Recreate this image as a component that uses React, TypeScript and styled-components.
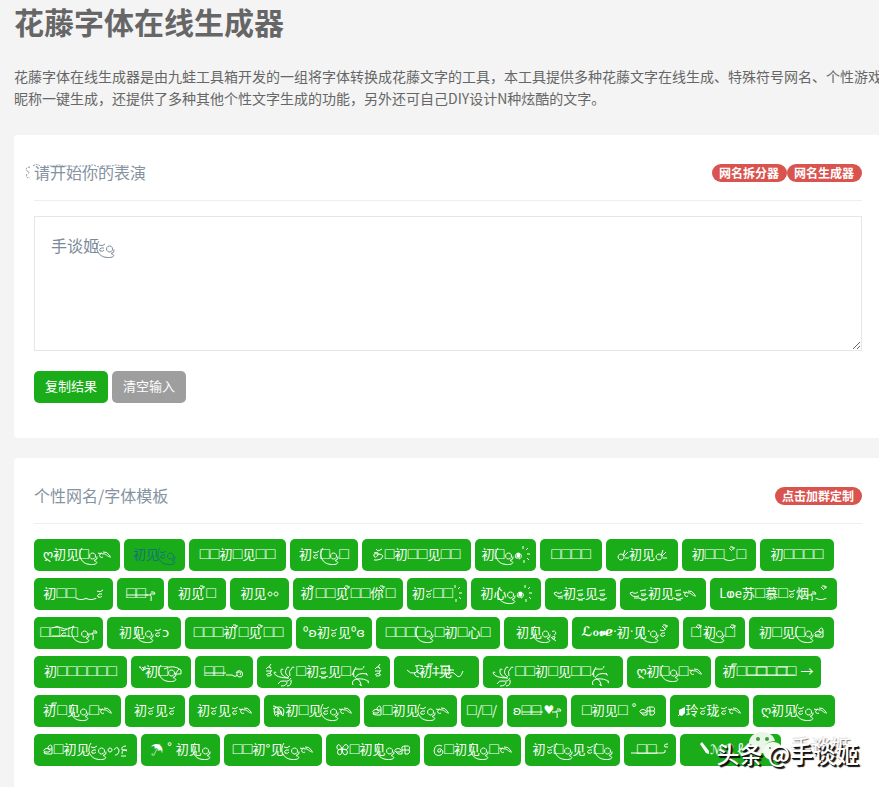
import React from "react";
import styled, { createGlobalStyle } from "styled-components";

const GlobalStyle = createGlobalStyle`
  *, *::before, *::after { box-sizing: border-box; }
  body {
    margin: 0;
    overflow: hidden;
    background: #f4f4f4;
    color: #666;
    font-family: "Noto Sans CJK SC", "DejaVu Sans", sans-serif;
    font-size: 14px;
  }
`;

const Page = styled.main`
  min-height: 100vh;
  margin-right: -3px;
  padding-left: 14px;
`;

const Title = styled.h1`
  margin: 0 0 23px;
  font-size: 30px;
  line-height: 42px;
  font-weight: 700;
  color: #666;
`;

const Intro = styled.p`
  margin: 0 0 26px;
  font-size: 14px;
  line-height: 22px;
`;

const Card = styled.section`
  margin-bottom: 20px;
  padding: 20px 20px 35px;
  background: #fff;
  border-radius: 4px;
`;

const CardHead = styled.header`
  display: flex;
  align-items: center;
  justify-content: space-between;
  height: 46px;
  padding-bottom: 10px;
  margin-bottom: 15px;
  border-bottom: 1px solid #eee;
`;

const CardTitle = styled.h2`
  position: relative;
  margin: 0;
  padding-bottom: 2px;
  font-size: 16px;
  line-height: 24px;
  font-weight: 400;
  color: #8592a1;
`;

const TitleFlourish = styled.svg`
  position: absolute;
  left: -10px;
  top: 0;
  width: 122px;
  height: 24px;
`;

const Badges = styled.div`
  display: flex;
`;

const Badge = styled.a`
  height: 18px;
  padding: 0 8px 0 7px;
  border-radius: 9px;
  background: #d9534f;
  color: #fff;
  font-size: 12px;
  line-height: 17px;
  font-weight: 700;
  text-decoration: none;
`;

const Editor = styled.div`
  position: relative;
  margin-bottom: 20px;
`;

const TextBox = styled.textarea`
  display: block;
  width: 100%;
  height: 135px;
  padding: 16px;
  border: 1px solid #e6e6e6;
  outline: none;
  background: #fff;
  color: #7b8a9b;
  font: 16px/24px "Noto Sans CJK SC", sans-serif;
  resize: vertical;
`;

const EditorFlourish = styled.div`
  position: absolute;
  left: 64px;
  top: 21px;
  display: flex;
  color: #7b8a9b;
  pointer-events: none;
`;

const Button = styled.button<{ $muted?: boolean }>`
  height: 32px;
  padding: 0 11px 2px;
  border: 0;
  border-radius: 5px;
  background: ${(p) => (p.$muted ? "#9e9e9e" : "#1aad19")};
  color: #fff;
  font: 13px/20px "Noto Sans CJK SC", "DejaVu Sans", sans-serif;
  white-space: nowrap;
`;

const Actions = styled.div`
  display: flex;
  gap: 4px;
`;

const Tags = styled.div`
  display: flex;
  flex-wrap: wrap;
  gap: 7px 4px;
`;

const Tag = styled(Button)<{ $width: number; $visited?: boolean }>`
  display: flex;
  align-items: center;
  justify-content: center;
  width: ${(p) => p.$width}px;
  padding: 0 0 2px;
  overflow: hidden;
  color: ${(p) => (p.$visited ? "#16717c" : "#fff")};
  white-space: pre;
`;

const Box = styled.span`
  width: 10px;
  font: 16px/20px "Liberation Sans", sans-serif;
  text-align: center;
`;

const Latin = styled.span`
  font: 12px/20px "DejaVu Sans", sans-serif;
`;

const Script = styled.span`
  font: 700 13px/20px "DejaVu Serif", "DejaVu Sans", serif;
`;

const Glyph = styled.svg`
  flex: none;
  height: 20px;
  overflow: visible;
  fill: none;
  stroke: currentColor;
  stroke-width: 1;
`;

const Watermark = styled.div`
  position: absolute;
  right: 20px;
  bottom: 16px;
  display: flex;
  align-items: center;
  color: #fff;
  font-size: 23px;
  line-height: 36px;
  font-weight: 500;
  text-shadow: 1px 1px 0 #111, 2px 2px 1px #111;
  pointer-events: none;
`;

const Account = styled.div`
  position: absolute;
  right: 28px;
  bottom: 22px;
  display: flex;
  align-items: center;
  gap: 8px;
  color: #fff;
  font-size: 20px;
  line-height: 36px;
  text-shadow: 1px 1px 1px #777, -1px -1px 1px #ddd;
  pointer-events: none;
`;

/* Ornament strokes, keyed by the name used between braces in a template. */
const ornaments: Record<string, { w: number; d: string; fill?: string }> = {
  h: { w: 9, d: "M-7 4C-12 11-8 20 1 20.500C8 21 10 18 5 16.500M3.500 9a3 3 0 1 0 .1 0M5 16.500q4-1 3-4" },
  t: { w: 13, d: "M0 9q2 1 4 0M5 13a2 2 0 1 1 0-3c3-1 4 3 8 3M5 8q4-1 7 4" },
  z: { w: 8, d: "M1 8q3 2 6-1M6 11H3q-2 1-1 3q3 1 4-1" },
  zz: { w: 9, d: "M1 8q3-1 6-1M2 11h5q-1 3-5 1M0 15q4 3 9 0M2 17h5" },
  d: { w: 7, d: "M2 14a3 3 0 1 1 3 1M2 14h3v-4H3v3", fill: "M3 9h3v4H3z" },
  r: { w: 9, d: "M2 2v3M7 4 5 6M9 10H6M8 16l-2-2M3 19v-3" },
  c: { w: 12, d: "M4 5l2 2 4-2M2 9q5-2 4 2q-3 4-4 1q-1-3 4-2q4 0 5 2q-1 4-6 4H2" },
  c2: { w: 11, d: "M9 7Q2 4 1 12q1 6 7 4q4-3 0-6q-4-1-3 3q3 1 3-2" },
  k: { w: 12, d: "M4 10a3 3 0 1 0 .1 0M6 12l2-6M7 12l4-4M8 14h4" },
  n: { w: 2, d: "M-5 4l3 3M-4 3h3v3M-1 4h2" },
  b: { w: 2, d: "M-19 12H2" },
  p: { w: 7, d: "M-2 12h4M3 9q4-1 4 2H2q2 2 1 7" },
  o: { w: 6, d: "M3 9a2 2 0 1 0 .1 0" },
  o2: { w: 5, d: "M1 10a2 2 0 1 1 2 3M0 16q4-3 4 0q-2 3-3 0l4 3" },
  q: { w: 9, d: "M0 10q2 5 9 3M3 10q3 1 5-1M4 15h5M0 10l3-1" },
  g: { w: 23, d: "M1 12Q3 17 16 17M8 9q-1 6 7 8M14 7q-4 5 2 9M19 7q-4 3-2 8M1 12a1 1 0 1 1 2 0M8 9a1 1 0 1 1 2 0M14 7a1 1 0 1 1 2 0M19 7a1 1 0 1 1 2 0M5 23q2-4 6-3q5 1 7-3M8 25q6 0 6-4M14 25q5 0 4-6" },
  G: { w: 23, d: "M3 16Q1 7 7 8t6-3M4 17q3-6 12-4M5 18q9-1 13 3M5 18q4 0 5 6M16 12a1 1 0 1 0 1 2M18 20a1 1 0 1 0 0 2M9 23a1 1 0 1 0 2 1M1 14l4-8M2 24q-2-4 3-6" },
  x: { w: 8, d: "M1 8l2-2h2l1 2M1 10h5M1 14q3-3 5-1t-4 2M4 6l2-3M7 9l-2 3" },
  y: { w: 10, d: "M2 13a3 2 0 1 1 4 0H1q-1 2 4 2h4V8Q8 4 5 8v2h4" },
  y2: { w: 15, d: "M1 13a3 2 0 1 1 4 0H1q1 3 6 2V8q3-2 3 1v6h3q3-2 1-4q2-4-2-4h-3M7 11h7" },
  w: { w: 4, d: "M-1 6l3 4 1-4M1 6l3 3V5M-2 6h2" },
  hat: { w: 4, d: "M-13 8Q-4 3 4 9v4h-6L2 8" },
  s: { w: 18, d: "M0 14h6q3 3 6 0M10 12q2-4 6-1q2 5-3 5q-4-2-1-5q4 0 2 3" },
  dots: { w: 0, d: "M-48 5h12M-47 17v2m0 2v2m0 2v2M-37 17v2m0 2v2m0 2v2" },
  f: { w: 1, d: "M-4 8V3H1M-4 5h4" },
  rail: { w: 4, d: "M-50 14H-2M-40 6h10M-19 6h10" },
  curl: { w: 3, d: "M-26 6q5-3 10 0t12-2M-26 14h18" },
  vine: { w: 12, d: "M0 9q3 4 8 3l4-3M8 5q5-2 8 1M10 5v6q4 2 6 4M8 11q-2 4 4 5" },
  vine2: { w: 14, d: "M-12 5h10M-3 4v5h5M-20 12h18M-9 9h8M-4 14q4-5 8 0t7-4M-4 12q-5 4 2 5" },
  leaf: { w: 7, d: "M0 16l4-4", fill: "M1 15v-5l6-3v6l-3 3z" },
  bug: { w: 13, d: "M1 6q5 0 9 8M1 9q6-5 9 6M3 15q-3-8 4-8t4 9q-4-5-8 0M6 9v8M2 12h8" },
  flower: { w: 13, d: "M6 10Q0 12 1 7q2-4 5 3q3-7 6-3q1 5-6 3q-6 0-4 5q4 3 4-5q1 8 5 5q2-5-5-5" },
  j: { w: 15, d: "M1 11q3-5 5 0q0 5-4 5M13 7q-5 0-4 4h5M9 15q0-6 5-3M8 17h5" },
  arab: { w: 12, d: "M-26 14H6q3 0 2-3M11 5q-5 0-3 3h3" },
  pen: { w: 12, d: "M3 4l7 9", fill: "M2 5l2-2 7 9v3l-3-1z" },
};

function Ornament({ name }: { name: string }) {
  const o = ornaments[name];
  return (
    <Glyph width={o.w} viewBox={`0 0 ${o.w || 1} 20`} aria-hidden="true">
      <path d={o.d} />
      {o.fill && <path d={o.fill} fill="currentColor" stroke="none" />}
    </Glyph>
  );
}

function Decorated({ text }: { text: string }) {
  return (
    <>
      {text.split(/(\{\w+\}|ℒℴ𝓋ℯ|[□·♥†‿])/u).filter(Boolean).map((part, i) => {
        if (part === "□") return <Box key={i}>□</Box>;
        if (part === "ℒℴ𝓋ℯ") return <Script key={i}>{part}</Script>;
        if (/^[·♥†‿]$/.test(part)) return <Latin key={i}>{part}</Latin>;
        if (part.startsWith("{")) return <Ornament key={i} name={part.slice(1, -1)} />;
        return <span key={i}>{part}</span>;
      })}
    </>
  );
}

const templates: [string, number][] = [
  ["ღ初见□{h}{t}", 86], ["初见{z}{h}", 61], ["□□初□见□□", 97], ["初{z}□{h}□", 68],
  ["{c}□初□□见□□", 109], ["初□{h}{d}{r}", 61], ["□□□□", 62], ["{k}初见{k}", 72],
  ["初□□‿{n}□", 74], ["初□□□□", 74],
  ["初□□‿‿{z}", 79], ["□□{b}{p}", 47], ["初见{n}□", 58], ["初见{o}{o}", 59],
  ["初{n}□□见{n}□□你{n}□", 110], ["初{z}□□{r}", 60], ["初心{h}{d}{r}", 70],
  ["{q}初{zz}见{zz}", 71], ["{q}{zz}初见{zz}{t}", 86], ["Lⱷe苏□慕□{z}烟{p}‿{n}", 127],
  ["□□{z}□{curl}{h}{p}", 69], ["初见{h}{z}ͻ", 74], ["□□□初{n}□见{n}□□", 107], ["ºʚ初{z}见ºɞ", 76],
  ["□□□□{h}□初□心□", 124], ["初见{h}{o2}", 64], ["ℒℴ𝓋ℯ·初·见·{h}{z}{n}", 107],
  ["□{n}初{h}□{n}", 62], ["初□见□{h}{y}", 85],
  ["初□□□□□□{dots}", 93], ["{w}初□{h}{hat}", 60], ["□□{b}{s}", 58],
  ["{x}{g}□初{zz}见□{G}{x}", 133], ["{vine}初{f}†见{vine2}", 85], ["{g}□□初□见□□{G}", 140],
  ["ღ初□{h}□{t}", 84], ["初{f}□□□□□□{rail}→", 106],
  ["初{f}□见{h}□{t}", 87], ["初{z}见{z}", 60], ["初{z}见{z}{t}", 71], ["{bug}初□见{z}{h}{t}", 96],
  ["{y}□初见{z}{h}{t}", 93], ["□/□/", 42], ["ʚ□□{b}♥{p}", 60], ["□初见□ ˚ {y2}", 95],
  ["{leaf}玲{z}珑{z}{t}", 79], ["ღ初见{z}{h}{t}", 82],
  ["{y}□初见{z}{h}{o}{j}", 103], ["☂ ˚ 初见{h}", 79], ["□□初°见{z}{h}{t}", 98],
  ["{flower}□初见{h}{y2}", 94], ["{c2}□初见{h}□{t}", 97], ["初{z}□{h}见{z}□{h}", 95],
  ["  □□{arab}", 52], ["{pen}ℳℛ ℓℴ𝓋ℯ", 101],
];

export default function App() {
  return (
    <>
      <GlobalStyle />
      <Page>
        <Title>花藤字体在线生成器</Title>
        <Intro>
          花藤字体在线生成器是由九蛙工具箱开发的一组将字体转换成花藤文字的工具，本工具提供多种花藤文字在线生成、特殊符号网名、个性游戏昵称一键生成，还提供了多种其他个性文字生成的功能，另外还可自己DIY设计N种炫酷的文字。
        </Intro>

        <Card>
          <CardHead>
            <CardTitle id="input-title">
              请开始你的表演
              <TitleFlourish viewBox="0 0 122 24" fill="none" stroke="currentColor" aria-hidden="true">
                <path
                  d="M6 7Q0 8 3 11Q7 12 3 14Q1 18 6 18M9 6q4-3 7 0t7 0h8q4-2 8 0h9q4 2 8 0h8q4-2 8 0t8 0h8q4-2 8 0h9"
                  strokeDasharray="2 1"
                />
              </TitleFlourish>
            </CardTitle>
            <Badges>
              <Badge href="#split">网名拆分器</Badge>
              <Badge href="#generate">网名生成器</Badge>
            </Badges>
          </CardHead>
          <Editor>
            <TextBox aria-labelledby="input-title" defaultValue="手谈姬" spellCheck={false} />
            <EditorFlourish>
              <Ornament name="z" />
              <Ornament name="h" />
            </EditorFlourish>
          </Editor>
          <Actions>
            <Button type="button">复制结果</Button>
            <Button type="button" $muted>清空输入</Button>
          </Actions>
        </Card>

        <Card>
          <CardHead>
            <CardTitle>个性网名/字体模板</CardTitle>
            <Badges>
              <Badge href="#custom">点击加群定制</Badge>
            </Badges>
          </CardHead>
          <Tags>
            {templates.map(([text, width], i) => (
              <Tag key={i} type="button" $width={width} $visited={i === 1}>
                <Decorated text={text} />
              </Tag>
            ))}
          </Tags>
        </Card>
      </Page>
      <Account>
        <svg width="34" height="32" viewBox="0 0 34 32" aria-hidden="true">
          <path d="M13 1C5 1 0 6 0 12c0 4 2 6 5 8l-1 4 5-2h6c-1-8 4-12 11-12C25 4 19 1 13 1z" fill="#e9f5e6" />
          <path d="M24 11c-6 0-10 4-10 9s4 9 10 9h4l4 2-1-4c2-2 3-4 3-7 0-5-4-9-10-9z" fill="#f4faf2" />
          <g fill="#3b9b3a">
            <circle cx="9" cy="8" r="2" />
            <circle cx="18" cy="8" r="2" />
            <circle cx="21" cy="17" r="1" />
            <circle cx="28" cy="17" r="1" />
          </g>
        </svg>
        <span>手谈姬</span>
      </Account>
      <Watermark>头条 @手谈姬</Watermark>
    </>
  );
}
